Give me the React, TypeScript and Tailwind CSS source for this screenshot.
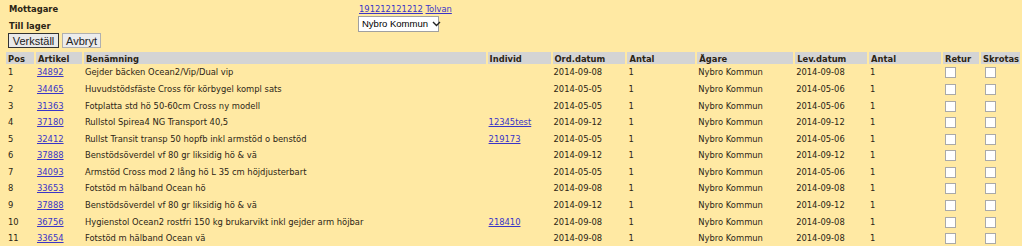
import React from 'react';

const rows = [
  ['1', '34892', 'Gejder bäcken Ocean2/Vip/Dual vip', '', '2014-09-08', '2014-09-08'],
  ['2', '34465', 'Huvudstödsfäste Cross för körbygel kompl sats', '', '2014-05-05', '2014-05-06'],
  ['3', '31363', 'Fotplatta std hö 50-60cm Cross ny modell', '', '2014-05-05', '2014-05-06'],
  ['4', '37180', 'Rullstol Spirea4 NG Transport 40,5', '12345test', '2014-09-12', '2014-09-12'],
  ['5', '32412', 'Rullst Transit transp 50 hopfb inkl armstöd o benstöd', '219173', '2014-05-05', '2014-05-06'],
  ['6', '37888', 'Benstödsöverdel vf 80 gr liksidig hö & vä', '', '2014-09-12', '2014-09-12'],
  ['7', '34093', 'Armstöd Cross mod 2 lång hö L 35 cm höjdjusterbart', '', '2014-05-05', '2014-05-06'],
  ['8', '33653', 'Fotstöd m hälband Ocean hö', '', '2014-09-08', '2014-09-08'],
  ['9', '37888', 'Benstödsöverdel vf 80 gr liksidig hö & vä', '', '2014-09-12', '2014-09-12'],
  ['10', '36756', 'Hygienstol Ocean2 rostfri 150 kg brukarvikt inkl gejder arm höjbar', '218410', '2014-09-08', '2014-09-08'],
  ['11', '33654', 'Fotstöd m hälband Ocean vä', '', '2014-09-08', '2014-09-08'],
];

const headers = ['Pos', 'Artikel', 'Benämning', 'Individ', 'Ord.datum', 'Antal', 'Ägare', 'Lev.datum', 'Antal', 'Retur', 'Skrotas'];
const widths = [29, 48, 404, 65, 75, 70, 98, 74, 74, 38, 41];

function Box() {
  return <span className="inline-block w-[11px] h-[11px] border border-[#a9a9a9] bg-white align-middle ml-[1px]" />;
}

export default function App() {
  return (
    <div className="w-[1022px] h-[246px] overflow-hidden bg-[#ffe9a3] text-[#2b2415] font-['DejaVu_Sans_Condensed','DejaVu_Sans',Verdana,sans-serif] [font-stretch:condensed] text-[9.3px]">
      <div className="flex pt-[2px]">
        <div className="w-[358px] pl-[9px] font-bold">
          <div className="h-[16px] leading-[14px]">Mottagare</div>
          <div className="h-[15px] leading-[16px]">Till lager</div>
        </div>
        <div className="flex flex-col">
          <div className="h-[14px] leading-[14px] pl-[1px]">
            <a className="text-[#3a35c8] underline" href="#">191212121212</a>{' '}
            <a className="text-[#3a35c8] underline" href="#">Tolvan</a>
          </div>
          <div className="w-[81px] h-[16px] border border-[#a0a0a0] bg-white flex items-center gap-[4px] pl-[3px] font-['Liberation_Sans',Arial,sans-serif] [font-stretch:normal] text-[9.5px] text-black whitespace-nowrap">
            <span>Nybro Kommun</span>
            <svg className="shrink-0" width="9" height="6" viewBox="0 0 9 6"><path d="M1 1l3.5 3.5L8 1" fill="none" stroke="#222" strokeWidth="1.4" /></svg>
          </div>
        </div>
      </div>
      <div className="flex gap-[3px] pl-[8px] font-['Liberation_Sans',Arial,sans-serif] [font-stretch:normal] text-[11px] text-[#222]">
        <button className="h-[15px] w-[51px] border border-[#333] bg-[#e9e9e9] leading-[12px]">Verkställ</button>
        <button className="h-[15px] w-[39px] border border-[#b0b0b0] bg-[#ececec] leading-[12px]">Avbryt</button>
      </div>
      <table className="table-fixed border-collapse ml-[6px] mt-[4px]">
        <colgroup>
          {widths.map((w, i) => <col key={i} style={{ width: w }} />)}
        </colgroup>
        <thead>
          <tr className="h-[12px]">
            {headers.map((h, i) => (
              <th key={i} className="bg-[#d4d4d4] border-r-2 border-[#ffe9a3] text-left font-bold pl-[2px] p-0 leading-[11px]">{h}</th>
            ))}
          </tr>
        </thead>
        <tbody>
          {rows.map((r) => (
            <tr key={r[0]} className="h-[16.6px]">
              <td className="pl-[2px]">{r[0]}</td>
              <td className="pl-[2px]"><a className="text-[#3a35c8] underline" href="#">{r[1]}</a></td>
              <td className="pl-[2px] whitespace-nowrap">{r[2]}</td>
              <td className="pl-[2px]">{r[3] && <a className="text-[#3a35c8] underline" href="#">{r[3]}</a>}</td>
              <td className="pl-[2px]">{r[4]}</td>
              <td className="pl-[2px]">1</td>
              <td className="pl-[2px]">Nybro Kommun</td>
              <td className="pl-[2px]">{r[5]}</td>
              <td className="pl-[2px]">1</td>
              <td className="pl-[2px]"><Box /></td>
              <td className="pl-[4px]"><Box /></td>
            </tr>
          ))}
        </tbody>
      </table>
    </div>
  );
}
